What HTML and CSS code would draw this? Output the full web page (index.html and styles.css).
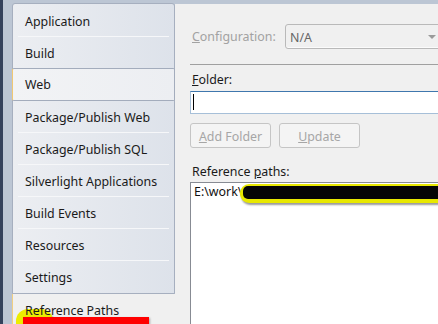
FILE: index.html
```html
<!DOCTYPE html>
<html>
<head>
<meta charset="utf-8">
<link rel="stylesheet" href="styles.css">
</head>
<body>
<div class="window">
  <div class="sidebar">
    <div class="nav">
      <div class="item">Application</div>
      <div class="item">Build</div>
      <div class="item hover">Web</div>
      <div class="item">Package/Publish Web</div>
      <div class="item">Package/Publish SQL</div>
      <div class="item">Silverlight Applications</div>
      <div class="item">Build Events</div>
      <div class="item">Resources</div>
      <div class="item last">Settings</div>
    </div>
    <div class="tab-selected">
      <span class="mark-yellow"></span>
      <span class="tab-text">Reference Paths</span>
      <span class="mark-red"></span>
    </div>
  </div>
  <div class="content">
    <div class="config-row">
      <span class="lbl disabled"><u>C</u>onfiguration:</span>
      <div class="select"><span class="select-text">N/A</span><span class="arrow"></span></div>
    </div>
    <div class="sep"></div>
    <div class="lbl folder-lbl"><u>F</u>older:</div>
    <div class="textbox"><span class="caret"></span></div>
    <div class="buttons">
      <button class="btn" disabled><u>A</u>dd Folder</button>
      <button class="btn" disabled><u>U</u>pdate</button>
    </div>
    <div class="lbl ref-lbl">Reference <u>p</u>aths:</div>
    <div class="listbox">
      <div class="path">E:\work\<span class="redact"><span class="scribble"></span></span></div>
    </div>
  </div>
</div>
</body>
</html>
```
FILE: styles.css
```css
* { box-sizing: border-box; }
html, body { margin: 0; padding: 0; }
body {
  width: 438px;
  height: 324px;
  overflow: hidden;
  font-family: "Noto Sans", "Open Sans", sans-serif;
  font-size: 12.4px;
  color: #1a1a1a;
}
.window {
  display: flex;
  height: 324px;
  background: #bcc6d4;
  border-left: 3px solid #34425c;
  padding-left: 9px;
}
.sidebar {
  width: 163px;
  flex: none;
  display: flex;
  flex-direction: column;
  padding-top: 3px;
}
.nav {
  border: 1px solid #a6afbf;
  border-radius: 3px 3px 0 0;
  background: linear-gradient(to right, #eceef2, #dde2ea);
  padding-top: 1px;
}
.item {
  height: 32px;
  line-height: 30px;
  padding-top: 2px;
  padding-left: 12px;
  white-space: nowrap;
  background: linear-gradient(#f6f7f9, #f6f7f9) no-repeat 5px 100% / calc(100% - 10px) 1px;
}
.item.last { background: none; }
.item.hover {
  margin: -1px -1px 0 -1px;
  height: 33px;
  line-height: 30px;
  padding-top: 1px;
  padding-left: 12px;
  border: 1px solid #a3acbc;
  border-left: 1px solid #f1c872;
  border-radius: 2px;
  background: linear-gradient(to right, #f2f3f5, #eceef2);
}
.tab-selected {
  flex: 1;
  background: #f0f0f0;
  border-left: 1px solid #f1cf82;
  padding-left: 12px;
  padding-top: 1px;
  line-height: 32px;
  position: relative;
}
.tab-text { position: relative; }
.mark-yellow {
  position: absolute;
  left: 3px;
  top: 15px;
  width: 37px;
  height: 24px;
  border-radius: 12px 12px 10px 10px;
  background: #eded00;
  box-shadow: 1px 2px 2px rgba(0,0,0,0.35);
}
.mark-red {
  position: absolute;
  left: 10px;
  top: 23px;
  width: 126px;
  height: 12px;
  background: #ff0000;
  box-shadow: 1px 1px 2px rgba(0,0,0,0.3);
}
.content {
  flex: 1;
  margin-top: 4px;
  background: #f0f0f0;
  padding-left: 15px;
  overflow: hidden;
  display: flex;
  flex-direction: column;
}
.lbl { padding-left: 2px; line-height: 16px; white-space: nowrap; }
.disabled { color: #a2a2a2; }
.config-row {
  display: flex;
  align-items: center;
  margin-top: 20px;
}
.config-row .lbl { width: 95px; flex: none; padding-top: 1px; }
.select {
  flex: 1;
  margin-right: -6px;
  height: 25px;
  border: 1px solid #b9b9b9;
  border-radius: 3px;
  background: #f0f0f0;
  display: flex;
  align-items: center;
  justify-content: space-between;
  padding: 1px 7px 0 4px;
  box-shadow: inset 0 -1px 0 #fbfbfb;
}
.select-text { color: #666; }
.arrow {
  width: 0; height: 0;
  border-left: 4px solid transparent;
  border-right: 4px solid transparent;
  border-top: 4px solid #9a9a9a;
}
.sep {
  margin-top: 15px;
  height: 1px;
  background: #a0a0a0;
}
.folder-lbl { margin-top: 7px; }
.textbox {
  margin-top: 3px;
  height: 23px;
  margin-right: -4px;
  background: #fff;
  border: 1px solid #a6bfd8;
  border-top-color: #3f77ad;
  padding: 2px 0 0 2px;
}
.caret {
  display: block;
  width: 1px;
  height: 16px;
  background: #000;
}
.buttons {
  display: flex;
  gap: 8px;
  margin-top: 9px;
}
.btn {
  width: 81px;
  height: 25px;
  border: 1px solid #c5c5c5;
  border-radius: 3px;
  background: #f4f4f4;
  color: #a6a6a6;
  font-family: inherit;
  font-size: 12.4px;
  padding: 1px 0 0;
}
.ref-lbl { margin-top: 16px; }
.listbox {
  margin-top: 2px;
  flex: 1;
  margin-right: -4px;
  margin-bottom: -4px;
  background: #fff;
  border: 1px solid #878b93;
  padding-left: 3px;
  padding-top: 1px;
}
.path {
  line-height: 16px;
  position: relative;
  white-space: nowrap;
  color: #111;
}
.redact {
  position: absolute;
  left: 46px;
  top: 0px;
  width: 220px;
  height: 19px;
  border-radius: 9px;
  background: #e8e800;
  box-shadow: 1px 2px 2px rgba(0,0,0,0.4);
}
.scribble {
  position: absolute;
  left: 3px;
  top: 2px;
  right: 0;
  height: 13px;
  border-radius: 5px;
  background: #050505;
}
```
